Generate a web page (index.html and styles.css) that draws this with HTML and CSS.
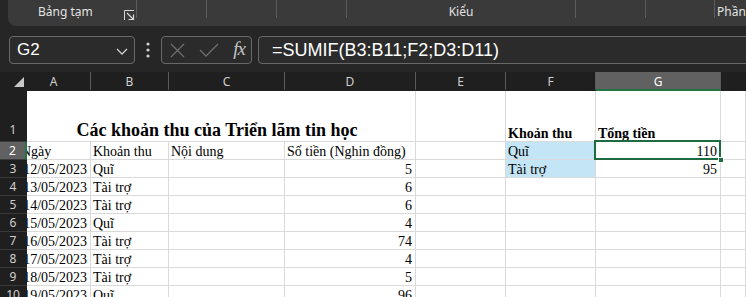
FILE: index.html
```html
<!DOCTYPE html>
<html lang="vi">
<head>
    <meta charset="UTF-8">
    <title>Các khoản thu</title>
    <link rel="stylesheet" href="styles.css">
</head>
<body>
    <div class="ribbon">
        <div class="ribbon-panel">
            <div class="group g1">
                <span class="group-label">Bảng tạm</span>
                <svg class="launcher" width="11" height="11" viewBox="0 0 11 11">
                    <path d="M0.5 10 V0.5 H10" fill="none" stroke="#d8d8d8" stroke-width="1"/>
                    <path d="M3 3 L9.5 9.5 M9.5 4.5 V9.5 H4.5" fill="none" stroke="#d8d8d8" stroke-width="1.2"/>
                </svg>
            </div>
            <div class="group g-small"></div>
            <div class="group g-small"></div>
            <div class="group g-small"></div>
            <div class="group g5"><span class="group-label">Kiểu</span></div>
            <div class="group g-small"></div>
            <div class="group g7"></div>
            <div class="group g8"><span class="group-label">Phần</span></div>
        </div>
    </div>

    <div class="formula-bar">
        <div class="name-box">
            <span>G2</span>
            <svg width="12" height="7" viewBox="0 0 12 7">
                <path d="M1 1 L6 6 L11 1" fill="none" stroke="#d0d0d0" stroke-width="1.3"/>
            </svg>
        </div>
        <div class="dots">
            <svg width="4" height="16" viewBox="0 0 4 16">
                <circle cx="2" cy="2" r="1.6" fill="#d0d0d0"/>
                <circle cx="2" cy="8" r="1.6" fill="#d0d0d0"/>
                <circle cx="2" cy="14" r="1.6" fill="#d0d0d0"/>
            </svg>
        </div>
        <div class="fx-box">
            <svg width="15" height="15" viewBox="0 0 15 15">
                <path d="M1 1 L14 14 M14 1 L1 14" stroke="#6e6e6e" stroke-width="1.3"/>
            </svg>
            <svg width="20" height="14" viewBox="0 0 20 14">
                <path d="M1 7 L7 13 L19 1" fill="none" stroke="#6e6e6e" stroke-width="1.3"/>
            </svg>
            <span class="fx">fx</span>
        </div>
        <div class="formula">=SUMIF(B3:B11;F2;D3:D11)</div>
    </div>

    <div class="sheet">
        <div class="hd corner">
            <svg width="27" height="19" viewBox="0 0 27 19">
                <polygon points="24,5 24,15 14,15" fill="#c8c8c8"/>
            </svg>
        </div>
        <div class="hd col col-a">A</div>
        <div class="hd col">B</div>
        <div class="hd col">C</div>
        <div class="hd col">D</div>
        <div class="hd col">E</div>
        <div class="hd col">F</div>
        <div class="hd col active-col">G</div>
        <div class="hd col last"></div>

        <div class="hd row row-1">1</div>
        <div class="c title">Các khoản thu của Triển lãm tin học</div>
        <div class="c"></div>
        <div class="c bold">Khoản thu</div>
        <div class="c bold">Tổng tiền</div>
        <div class="c"></div>

        <div class="hd row active-row">2</div>
        <div class="c a left"><span>Ngày</span></div>
        <div class="c">Khoản thu</div>
        <div class="c">Nội dung</div>
        <div class="c">Số tiền (Nghin đồng)</div>
        <div class="c"></div>
        <div class="c blue">Quĩ</div>
        <div class="c num selected">110</div>
        <div class="c"></div>

        <div class="hd row">3</div>
        <div class="c a">12/05/2023</div>
        <div class="c">Quĩ</div>
        <div class="c"></div>
        <div class="c num">5</div>
        <div class="c"></div>
        <div class="c blue">Tài trợ</div>
        <div class="c num">95</div>
        <div class="c"></div>

        <div class="hd row">4</div>
        <div class="c a">13/05/2023</div>
        <div class="c">Tài trợ</div>
        <div class="c"></div>
        <div class="c num">6</div>
        <div class="c"></div>
        <div class="c"></div>
        <div class="c"></div>
        <div class="c"></div>

        <div class="hd row">5</div>
        <div class="c a">14/05/2023</div>
        <div class="c">Tài trợ</div>
        <div class="c"></div>
        <div class="c num">6</div>
        <div class="c"></div>
        <div class="c"></div>
        <div class="c"></div>
        <div class="c"></div>

        <div class="hd row">6</div>
        <div class="c a">15/05/2023</div>
        <div class="c">Quĩ</div>
        <div class="c"></div>
        <div class="c num">4</div>
        <div class="c"></div>
        <div class="c"></div>
        <div class="c"></div>
        <div class="c"></div>

        <div class="hd row">7</div>
        <div class="c a">16/05/2023</div>
        <div class="c">Tài trợ</div>
        <div class="c"></div>
        <div class="c num">74</div>
        <div class="c"></div>
        <div class="c"></div>
        <div class="c"></div>
        <div class="c"></div>

        <div class="hd row">8</div>
        <div class="c a">17/05/2023</div>
        <div class="c">Tài trợ</div>
        <div class="c"></div>
        <div class="c num">4</div>
        <div class="c"></div>
        <div class="c"></div>
        <div class="c"></div>
        <div class="c"></div>

        <div class="hd row">9</div>
        <div class="c a">18/05/2023</div>
        <div class="c">Tài trợ</div>
        <div class="c"></div>
        <div class="c num">5</div>
        <div class="c"></div>
        <div class="c"></div>
        <div class="c"></div>
        <div class="c"></div>

        <div class="hd row">10</div>
        <div class="c a">19/05/2023</div>
        <div class="c">Quĩ</div>
        <div class="c"></div>
        <div class="c num">96</div>
        <div class="c"></div>
        <div class="c"></div>
        <div class="c"></div>
        <div class="c"></div>
    </div>
</body>
</html>
```

FILE: styles.css
```css
html, body {
    margin: 0;
    padding: 0;
}
body {
    width: 746px;
    height: 297px;
    overflow: hidden;
    background: #262626;
    font-family: "Noto Sans", "Open Sans", sans-serif;
}

/* ribbon */
.ribbon {
    height: 26px;
}
.ribbon-panel {
    margin-left: 8px;
    height: 26px;
    background: #3a3a3a;
    border-bottom-left-radius: 8px;
    display: flex;
    align-items: flex-start;
    overflow: hidden;
}
.group {
    height: 18px;
    border-right: 1px solid #5c5c5c;
    display: flex;
    align-items: flex-end;
    justify-content: center;
    box-sizing: border-box;
    color: #e2e2e2;
    font-size: 12px;
    flex-shrink: 0;
}
.group-label {
    line-height: 14px;
    margin-bottom: -1px;
}
.g1 {
    width: 129px;
    justify-content: flex-start;
    padding-left: 30px;
}
.g1 .launcher {
    margin-left: 31px;
    margin-bottom: -3px;
}
.g-small {
    width: 70px;
}
.g5 {
    width: 229px;
}
.g7 {
    width: 69px;
}
.g8 {
    border-right: none;
    justify-content: flex-start;
    padding-left: 2px;
    width: 60px;
}

/* formula bar */
.formula-bar {
    height: 46px;
    box-sizing: border-box;
    padding-top: 10px;
    display: flex;
    align-items: flex-start;
}
.name-box, .fx-box, .formula {
    height: 28px;
    box-sizing: border-box;
    border: 1px solid #686868;
    border-radius: 4px;
    background: #2b2b2b;
    display: flex;
    align-items: center;
    color: #ffffff;
    font-family: "Liberation Sans", Arial, sans-serif;
}
.name-box {
    margin-left: 9px;
    width: 126px;
    padding: 0 6px 0 7px;
    justify-content: space-between;
    font-size: 17px;
}
.name-box svg {
    margin-top: 2px;
}
.dots {
    width: 26px;
    height: 28px;
    display: flex;
    align-items: center;
    justify-content: center;
}
.fx-box {
    width: 91px;
    padding: 0 6px 0 8px;
    justify-content: space-between;
}
.fx {
    font-family: "Liberation Serif", serif;
    font-style: italic;
    font-size: 19px;
    color: #c4c4c4;
    letter-spacing: -1px;
    margin-top: -2px;
}
.formula {
    margin-left: 6px;
    flex: 1;
    margin-right: -10px;
    padding-left: 13px;
    font-size: 18px;
    border-radius: 4px 0 0 4px;
}

/* sheet */
.sheet {
    display: grid;
    grid-template-columns: 27px 64px 78px 116px 131px 90px 90px 125px 25px;
    grid-template-rows: 19px 51px repeat(9, 18px);
    background: #ffffff;
}
.hd {
    background: #1f1f1f;
    color: #d0d0d0;
    font-size: 12px;
    display: flex;
    align-items: center;
    justify-content: center;
    box-sizing: border-box;
}
.corner {
    background: #1f1f1f;
}
.col {
    border-right: 1px solid #5a5a5a;
    border-bottom: 2px solid #1f1f1f;
    padding-top: 1px;
}
.col-a {
    padding-right: 10px;
}
.col.last {
    border-right: none;
}
.active-col {
    background: #616161;
    border-bottom: 2px solid #217346;
    color: #ffffff;
}
.row {
    border-bottom: 1px solid #3a3a3a;
    padding-right: 1px;
}
.row-1 {
    align-items: flex-end;
    padding-bottom: 3px;
}
.active-row {
    background: #616161;
    border-right: 2px solid #217346;
    padding-right: 0;
    color: #ffffff;
}

.c {
    font-family: "Liberation Serif", "Times New Roman", serif;
    font-size: 14px;
    line-height: 15px;
    color: #000000;
    box-sizing: border-box;
    border-right: 1px solid #dadada;
    border-bottom: 1px solid #dadada;
    padding: 0 3px 0 2px;
    display: flex;
    align-items: flex-end;
    white-space: nowrap;
    overflow: hidden;
}
.c.a {
    justify-content: flex-end;
}
.c.a.left {
    justify-content: flex-start;
}
.c.a.left span {
    margin-left: -8px;
}
.num {
    justify-content: flex-end;
}
.title {
    grid-column: span 4;
    justify-content: center;
    padding-right: 10px;
    padding-bottom: 1px;
    font-weight: bold;
    font-size: 18px;
    line-height: 19px;
    overflow: visible;
}
.bold {
    font-weight: bold;
}
.blue {
    background: #c3e5f6;
}
.selected {
    position: relative;
    overflow: visible;
}
.selected::after {
    content: "";
    position: absolute;
    left: -2px;
    top: -2px;
    right: -1px;
    bottom: -1px;
    border: 2px solid #1e6b41;
}
.selected::before {
    content: "";
    position: absolute;
    right: -4px;
    bottom: -4px;
    width: 6px;
    height: 6px;
    background: #1e6b41;
    border: 1px solid #ffffff;
    box-sizing: border-box;
    z-index: 1;
}
```
